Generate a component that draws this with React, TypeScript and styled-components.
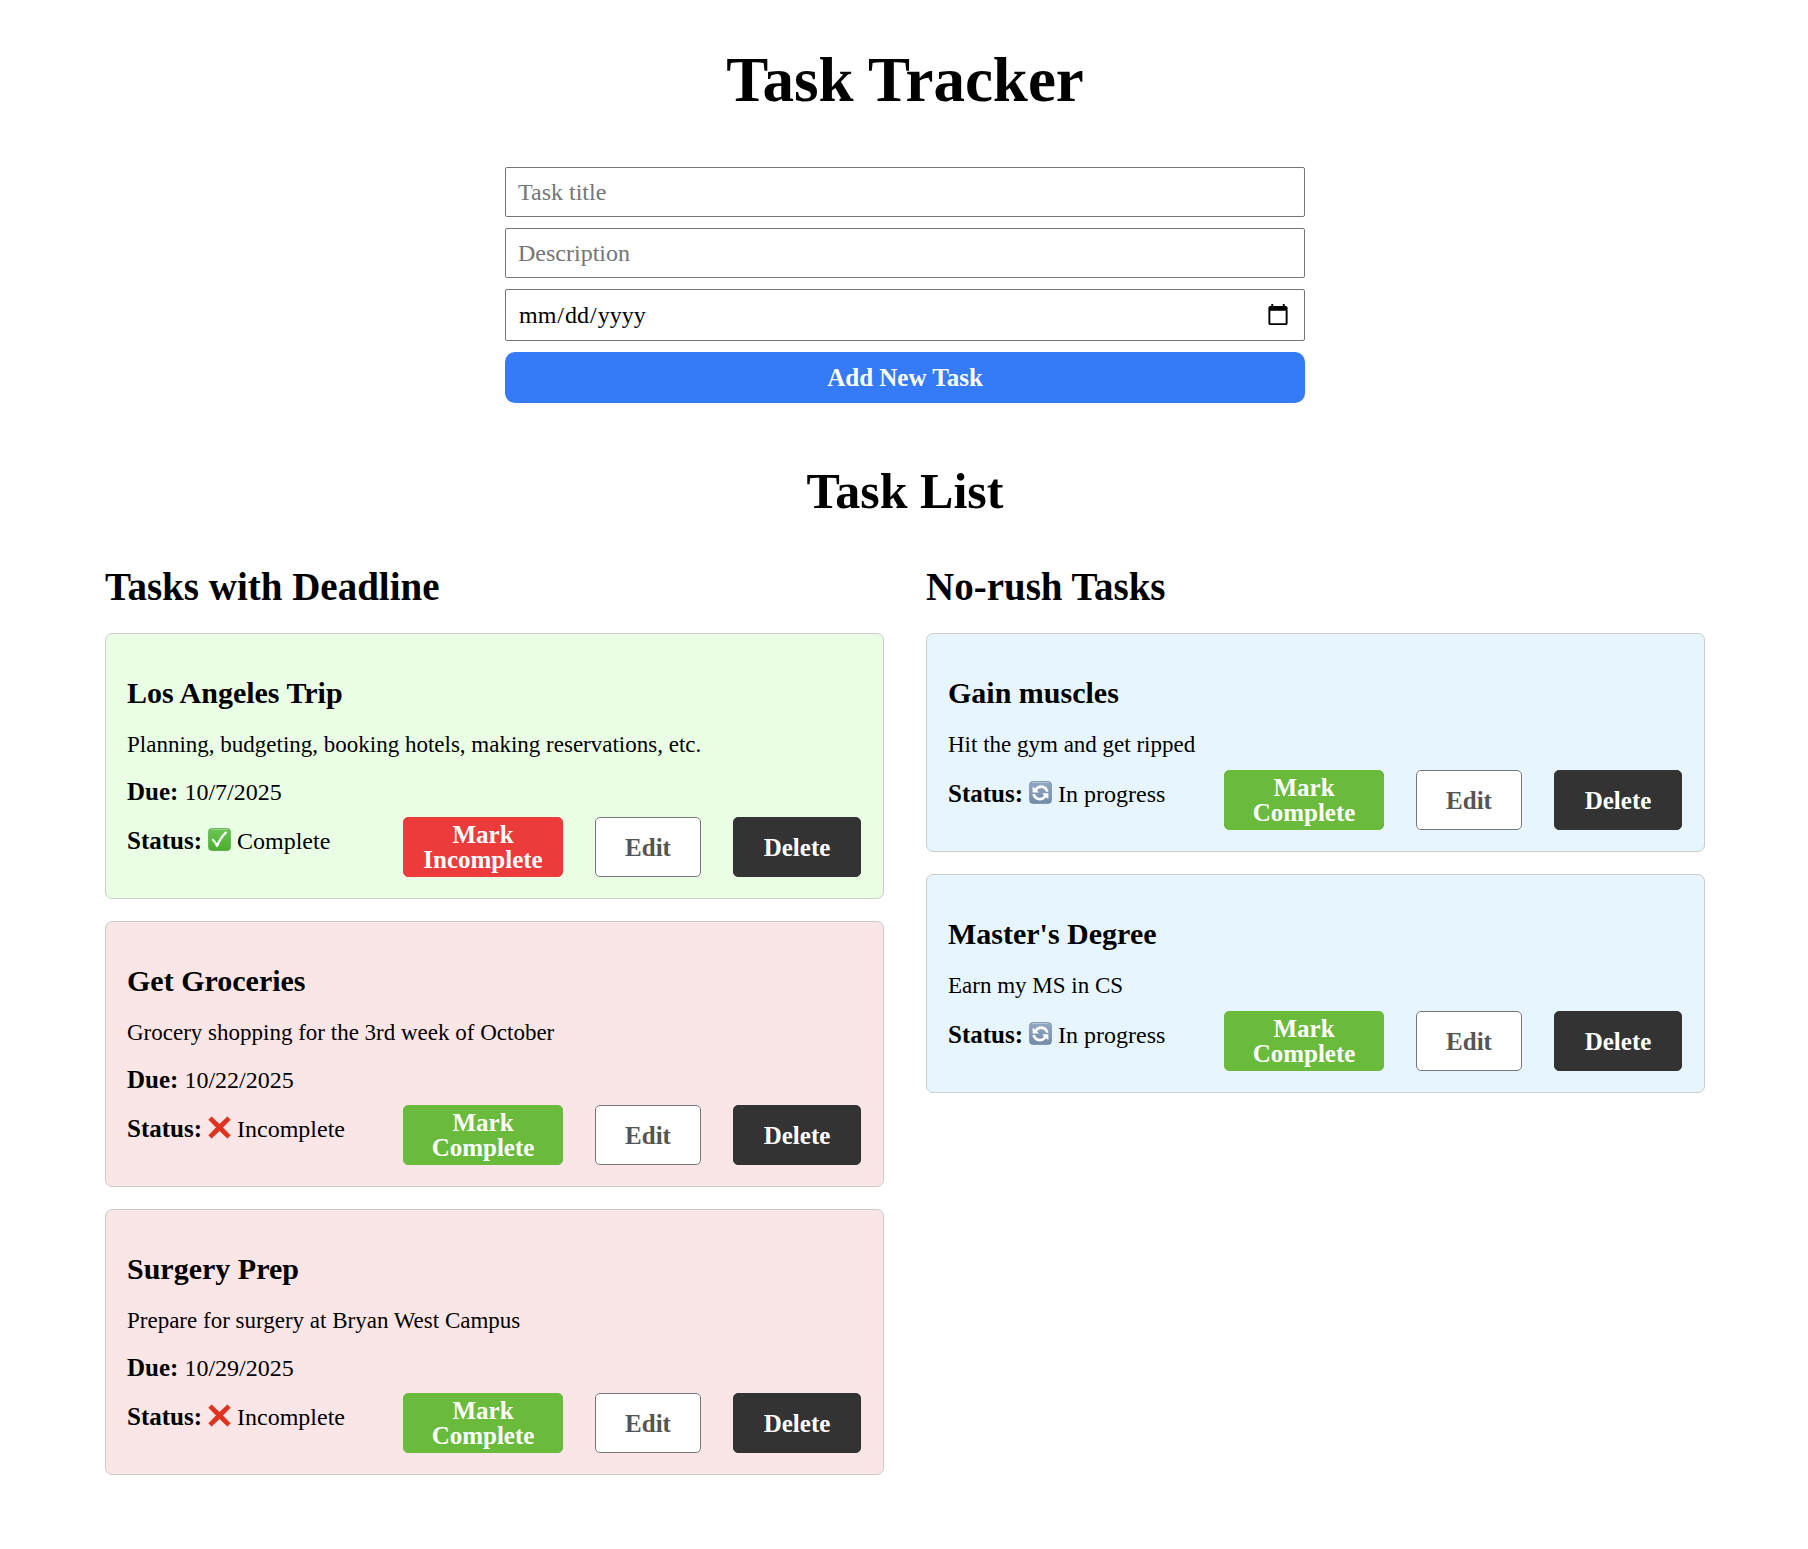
import React from 'react';
import styled, { createGlobalStyle } from 'styled-components';

const GlobalStyle = createGlobalStyle`
  * { box-sizing: border-box; }
  body {
    margin: 0;
    background: #fff;
    color: #000;
    font-family: Georgia, "Liberation Serif", serif;
    font-size: 24px;
    line-height: 26px;
  }
  h1, h2, h3, h4, p { margin: 0; }
`;

const Page = styled.main`
  padding: 50px 103px 75px 105px;
`;

const PageTitle = styled.h1`
  font-size: 63px;
  line-height: 60px;
  text-align: center;
`;

const TaskForm = styled.form`
  display: flex;
  flex-direction: column;
  gap: 11px;
  max-width: 800px;
  margin: 57px auto 60px;
`;

const Field = styled.input`
  width: 100%;
  padding: 11px 12px;
  border: 1px solid #767676;
  border-radius: 2px;
  background: #fff;
  color: #000;
  font-family: inherit;
  font-size: 24px;
  line-height: 26px;
  &::placeholder { color: #757575; }
`;

const AddButton = styled.button`
  padding: 12px;
  border: 0;
  border-radius: 10px;
  background: #357af6;
  color: #fff;
  font: bold 25px/27px Georgia, "Liberation Serif", serif;
  cursor: pointer;
`;

const ListTitle = styled.h2`
  font-size: 50px;
  line-height: 56px;
  text-align: center;
`;

const Columns = styled.div`
  display: grid;
  grid-template-columns: 1fr 1fr;
  gap: 42px;
  align-items: start;
  margin-top: 45px;
`;

const Column = styled.section`
  display: flex;
  flex-direction: column;
  gap: 22px;
`;

const ColumnTitle = styled.h3`
  margin-bottom: 1px;
  font-size: 39px;
  line-height: 46px;
`;

type Tone = 'done' | 'missed' | 'open';
const tones: Record<Tone, string> = { done: '#eafee6', missed: '#fae6e6', open: '#e7f6fe' };

const Card = styled.article<{ $tone: Tone }>`
  padding: 42px 22px 21px 21px;
  border: 1px solid #ccc;
  border-radius: 7px;
  background: ${(p) => tones[p.$tone]};
`;

const CardTitle = styled.h4`
  margin-bottom: 22px;
  font-size: 30px;
  line-height: 34px;
`;

const Description = styled.p`
  font-size: 23px;
`;

const Due = styled.p`
  margin-top: 21px;
`;

const Label = styled.strong`
  font-size: 25px;
`;

const CardFooter = styled.div`
  display: flex;
  justify-content: space-between;
  align-items: flex-start;
  gap: 32px;
  margin-top: 12px;
`;

const Status = styled.p`
  display: flex;
  align-items: baseline;
  gap: 6px;
  padding-top: 11px;
  white-space: nowrap;
  svg { width: 23px; height: 23px; align-self: flex-start; }
`;

const Actions = styled.div`
  display: flex;
  gap: 32px;
`;

type Kind = 'complete' | 'incomplete' | 'edit' | 'delete';
const kinds: Record<Kind, { bg: string; fg: string; border: string; width: string }> = {
  complete: { bg: '#6aba3c', fg: '#fff', border: '#6aba3c', width: '160px' },
  incomplete: { bg: '#eb3b3b', fg: '#fff', border: '#eb3b3b', width: '160px' },
  edit: { bg: '#fff', fg: '#555', border: '#777', width: '106px' },
  delete: { bg: '#333', fg: '#fff', border: '#333', width: '128px' },
};

const ActionButton = styled.button<{ $kind: Kind }>`
  width: ${(p) => kinds[p.$kind].width};
  min-height: 60px;
  padding: 4px 12px;
  border: 1px solid ${(p) => kinds[p.$kind].border};
  border-radius: 5px;
  background: ${(p) => kinds[p.$kind].bg};
  color: ${(p) => kinds[p.$kind].fg};
  font: bold 25px/25px Georgia, "Liberation Serif", serif;
  cursor: pointer;
`;

function StatusIcon({ tone }: { tone: Tone }) {
  if (tone === 'done') {
    return (
      <svg viewBox="0 0 23 23" aria-hidden="true">
        <defs>
          <linearGradient id="doneFill" x1="0" y1="0" x2="0" y2="1">
            <stop offset="0" stopColor="#69c552" />
            <stop offset="1" stopColor="#4bae2f" />
          </linearGradient>
        </defs>
        <rect x="0.3" y="0.3" width="22.4" height="22.4" rx="3.8" fill="#3f9a2b" />
        <rect x="0.8" y="1.2" width="21.4" height="21" rx="3.4" fill="url(#doneFill)" />
        <path d="M3 1.4H20" stroke="#a5dc96" strokeWidth="0.9" strokeLinecap="round" />
        <path d="M4.8 11.8C6.6 13 7.8 15.2 9.2 18C11 12.8 13.8 8.4 17.8 4.6" fill="none" stroke="#fff" strokeWidth="2.2" strokeLinecap="round" strokeLinejoin="round" />
      </svg>
    );
  }
  if (tone === 'missed') {
    return (
      <svg viewBox="0 0 23 23" aria-hidden="true">
        <path d="M3.6 0.8L11.5 8.3L19.4 0.8L22.3 3.7L14.8 11.5L22.3 19.3L19.4 22.2L11.5 14.7L3.6 22.2L0.7 19.3L8.2 11.5L0.7 3.7Z" fill="#e0321f" strokeLinejoin="round" stroke="#e0321f" strokeWidth="0.6" />
      </svg>
    );
  }
  return (
    <svg viewBox="0 0 23 23" aria-hidden="true">
      <defs>
        <linearGradient id="openFill" x1="0" y1="0" x2="0" y2="1">
          <stop offset="0" stopColor="#91a8c5" />
          <stop offset="1" stopColor="#748ba9" />
        </linearGradient>
      </defs>
      <rect x="0.3" y="0.3" width="22.4" height="22.4" rx="3.8" fill="#667a94" />
      <rect x="0.8" y="1.2" width="21.4" height="20.8" rx="3.4" fill="url(#openFill)" />
      <path d="M3 1.4H20" stroke="#c0cedf" strokeWidth="0.9" strokeLinecap="round" />
      <path d="M19.6 10.8C18.4 3.4 9.6 2.4 6 7.6L3.6 5.8V11.6H9.9L8 9.4C10.4 6.2 15.2 6 17 10.8Z" fill="#fff" />
      <path d="M3.4 13C4.6 20.4 13.4 21.4 17 16.2L19.4 18V12.2H13.1L15 14.4C12.6 17.6 7.8 17.8 6 13Z" fill="#fff" />
    </svg>
  );
}

interface Task {
  title: string;
  description: string;
  due?: string;
  tone: Tone;
}

const statusText: Record<Tone, string> = { done: 'Complete', missed: 'Incomplete', open: 'In progress' };

const deadlineTasks: Task[] = [
  { title: 'Los Angeles Trip', description: 'Planning, budgeting, booking hotels, making reservations, etc.', due: '10/7/2025', tone: 'done' },
  { title: 'Get Groceries', description: 'Grocery shopping for the 3rd week of October', due: '10/22/2025', tone: 'missed' },
  { title: 'Surgery Prep', description: 'Prepare for surgery at Bryan West Campus', due: '10/29/2025', tone: 'missed' },
];

const openTasks: Task[] = [
  { title: 'Gain muscles', description: 'Hit the gym and get ripped', tone: 'open' },
  { title: "Master's Degree", description: 'Earn my MS in CS', tone: 'open' },
];

function TaskCard({ task }: { task: Task }) {
  const done = task.tone === 'done';
  return (
    <Card $tone={task.tone}>
      <CardTitle>{task.title}</CardTitle>
      <Description>{task.description}</Description>
      {task.due && (
        <Due>
          <Label>Due:</Label> {task.due}
        </Due>
      )}
      <CardFooter>
        <Status>
          <Label>Status:</Label>
          <StatusIcon tone={task.tone} />
          <span>{statusText[task.tone]}</span>
        </Status>
        <Actions>
          <ActionButton type="button" $kind={done ? 'incomplete' : 'complete'}>
            {done ? 'Mark Incomplete' : 'Mark Complete'}
          </ActionButton>
          <ActionButton type="button" $kind="edit">Edit</ActionButton>
          <ActionButton type="button" $kind="delete">Delete</ActionButton>
        </Actions>
      </CardFooter>
    </Card>
  );
}

export default function App() {
  return (
    <>
      <GlobalStyle />
      <Page>
        <PageTitle>Task Tracker</PageTitle>
        <TaskForm onSubmit={(e) => e.preventDefault()}>
          <Field type="text" placeholder="Task title" aria-label="Task title" />
          <Field type="text" placeholder="Description" aria-label="Description" />
          <Field type="date" aria-label="Due date" />
          <AddButton type="submit">Add New Task</AddButton>
        </TaskForm>
        <ListTitle>Task List</ListTitle>
        <Columns>
          <Column>
            <ColumnTitle>Tasks with Deadline</ColumnTitle>
            {deadlineTasks.map((t) => <TaskCard key={t.title} task={t} />)}
          </Column>
          <Column>
            <ColumnTitle>No-rush Tasks</ColumnTitle>
            {openTasks.map((t) => <TaskCard key={t.title} task={t} />)}
          </Column>
        </Columns>
      </Page>
    </>
  );
}
